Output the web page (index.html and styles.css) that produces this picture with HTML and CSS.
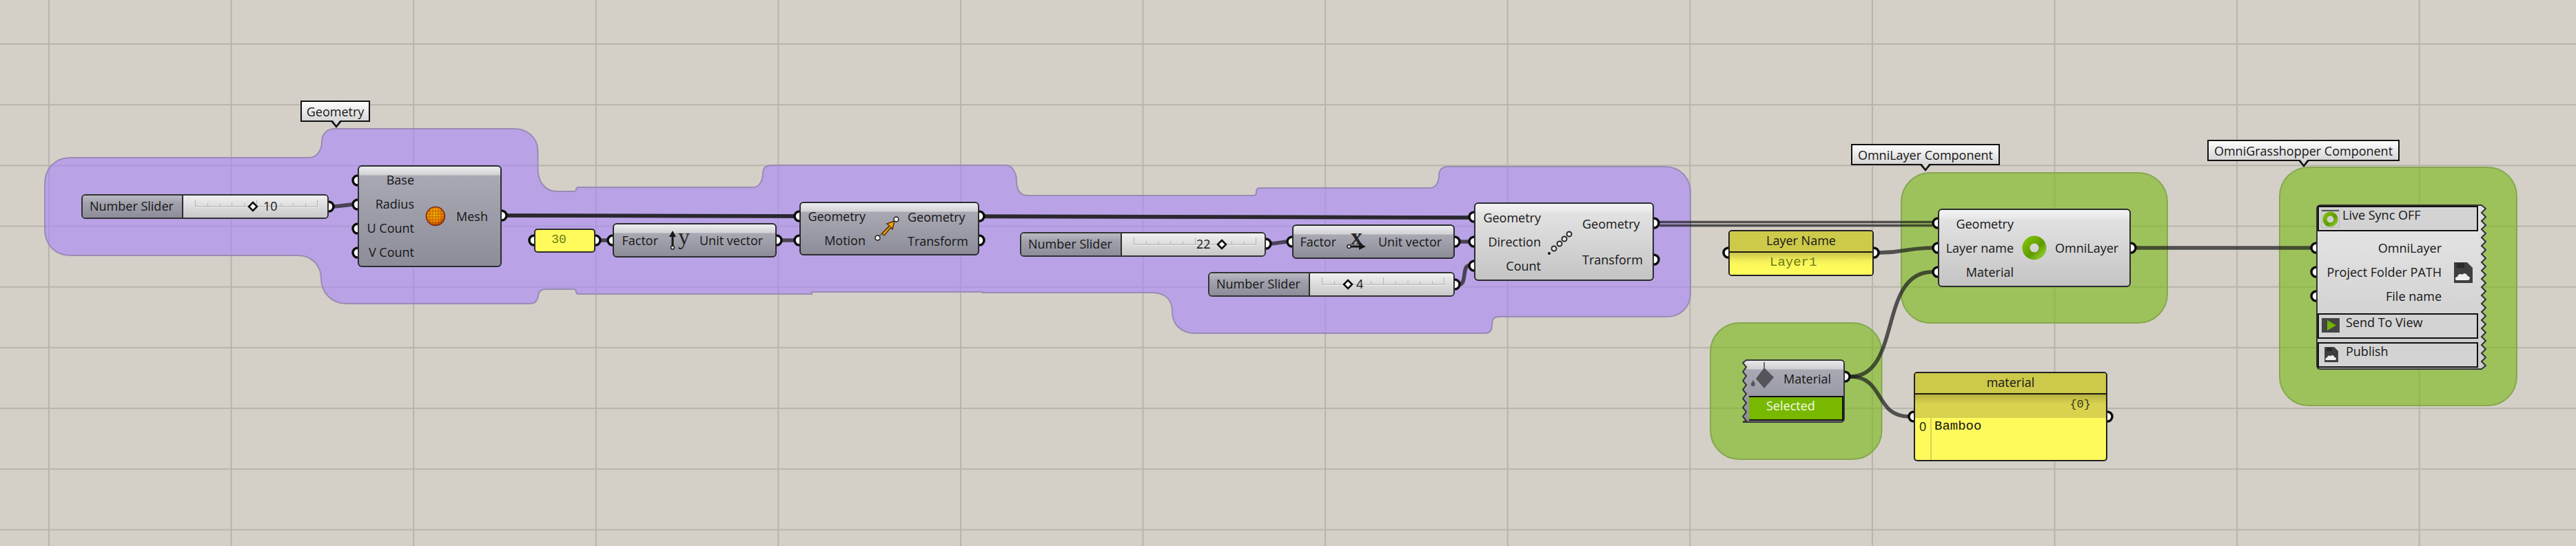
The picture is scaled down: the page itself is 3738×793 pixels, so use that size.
FILE: index.html
```html
<!DOCTYPE html>
<html lang="en">
<head>
    <meta charset="UTF-8">
    <meta name="viewport" content="width=device-width, initial-scale=1.0">
    <title>Grasshopper definition</title>
    <link rel="stylesheet" href="styles.css">
</head>
<body>
    <div class="canvas">
        <!-- groups, wires and ports sit under the nodes -->
        <svg class="wires" width="3738" height="793" viewBox="0 0 3738 793">
            <path class="group group-purple" d="M102 229 L449 229 C460 229 467 218 467 205 C467 195 475 187 485 187 L745 187 C766 187 780.5 200 780.5 220 L780.5 245 C780.5 265 792 278 808 278 L832 278 Q836 278 836 275 Q836 272 840 272 L1093 272 C1102 272 1107 262 1107 252 Q1107 240 1120 240 L1460 240 C1468 240 1475 250 1475 262 C1475 275 1480 284 1492 284 L1819 284 Q1823 284 1823 279 Q1823 273 1828 273 L2075 273 C2083 273 2088 265 2088 255 Q2088 242 2102 242 L2415 242 C2438 242 2453 258 2453 280 L2453 425 C2453 447 2438 460 2418 460 L2174 460 Q2165 460 2165 472 Q2165 484 2155 484 L1735 484 C1712 484 1701 470 1701 452 C1701 435 1690 425 1672 425 L1426 425 L1426 424 L1178 424 L1178 427 L840 427 Q836 427 836 424 Q836 420 832 420 L792 420 Q782 420 781 430 Q779 441 770 441 L502 441 C482 441 466 425 466 405 C466 385 452 371 432 371 L102 371 C80 371 65 355 65 333 L65 267 C65 245 80 229 102 229 Z"/>
            <rect class="group group-green" x="2759" y="251" width="386" height="218" rx="42"/>
            <rect class="group group-green" x="2482" y="469" width="248.500" height="198" rx="42"/>
            <rect class="group group-green" x="3308" y="243" width="344" height="346" rx="42"/>

            <g class="wire">
                <path d="M485 300 L511 297"/>
                <path d="M736 313 L1152 314"/>
                <path d="M736 313 L2131 316"/>
                <path d="M864 349 L881 349"/>
                <path d="M1127 349 L1152 349"/>
                <path d="M1429 314 L2131 316"/>
                <path d="M1845 354 L1867 351"/>
                <path d="M2119 351 L2131 351"/>
                <path d="M2118 413 C2128 413 2122 386 2131 386"/>
                <path d="M2727 367 C2765 367 2765 360 2804 360"/>
                <path d="M3100 360 L3353 360"/>
                <path d="M2685 547 C2760 547 2725 395 2804 395"/>
                <path d="M2685 547 C2735 547 2720 605 2770 605"/>
            </g>
            <g class="wire wire-thin">
                <path d="M2408 322.500 L2804 322.500"/>
                <path d="M2408 327.500 L2804 327.500"/>
            </g>

            <g class="ports">
                <circle cx="477" cy="300" r="7"/>
                <circle cx="519" cy="262" r="7"/>
                <circle cx="519" cy="297" r="7"/>
                <circle cx="519" cy="332" r="7"/>
                <circle cx="519" cy="367" r="7"/>
                <circle cx="728" cy="313" r="7"/>
                <circle cx="775" cy="349" r="7"/>
                <circle cx="864" cy="349" r="7"/>
                <circle cx="889" cy="349" r="7"/>
                <circle cx="1127" cy="349" r="7"/>
                <circle cx="1160" cy="314" r="7"/>
                <circle cx="1160" cy="349" r="7"/>
                <circle cx="1421" cy="314" r="7"/>
                <circle cx="1421" cy="349" r="7"/>
                <circle cx="1837" cy="354" r="7"/>
                <circle cx="1875" cy="351" r="7"/>
                <circle cx="2111" cy="351" r="7"/>
                <circle cx="2111" cy="413" r="7"/>
                <circle cx="2139" cy="315" r="7"/>
                <circle cx="2139" cy="351" r="7"/>
                <circle cx="2139" cy="386" r="7"/>
                <circle cx="2400" cy="324" r="7"/>
                <circle cx="2400" cy="377" r="7"/>
                <circle cx="2508" cy="367" r="7"/>
                <circle cx="2719" cy="367" r="7"/>
                <circle cx="2812" cy="324" r="7"/>
                <circle cx="2812" cy="360" r="7"/>
                <circle cx="2812" cy="395" r="7"/>
                <circle cx="3092" cy="360" r="7"/>
                <circle cx="3361" cy="360" r="7"/>
                <circle cx="3361" cy="395" r="7"/>
                <circle cx="3361" cy="430" r="7"/>
                <circle cx="2677" cy="547" r="7"/>
                <circle cx="2777" cy="605" r="7"/>
                <circle cx="3058" cy="605" r="7"/>
            </g>
        </svg>

        <!-- shared slider ruler -->
        <svg class="defs" width="0" height="0">
            <defs>
                <g id="ruler">
                    <path class="ruler-light" d="M0 19.500 H178"/>
                    <path class="ruler-dark" d="M0.500 8 V18 M18.500 13 V18 M36 13 V18 M53.500 13 V18 M71.500 13 V18 M89.500 8 V18 M107 13 V18 M125 13 V18 M142.500 13 V18 M160.500 13 V18 M177.500 8 V18 M0 18 H178"/>
                </g>
                <g id="floppy">
                    <path class="floppy-body" d="M0 0 H19 L27 8 V30 H0 Z"/>
                    <rect class="floppy-slot" x="4" y="1" width="11" height="7"/>
                    <path class="floppy-cloud" d="M4 26 C1 26 1 21 5 21 C5.500 17 10 16 12 18 C14 15 19 16 19.500 20 C24 20 24 26 20 26 Z"/>
                </g>
                <radialGradient id="ball" cx="0.450" cy="0.400" r="0.600">
                    <stop offset="0" stop-color="#ffb800"/>
                    <stop offset="0.700" stop-color="#ee8a00"/>
                    <stop offset="1" stop-color="#b03a05"/>
                </radialGradient>
                <linearGradient id="ring" x1="0" y1="0" x2="1" y2="1">
                    <stop offset="0" stop-color="#7fbe00"/>
                    <stop offset="0.600" stop-color="#5d9a00"/>
                    <stop offset="1" stop-color="#90c830"/>
                </linearGradient>
                <linearGradient id="zig-dark" x1="0" y1="0" x2="0" y2="1">
                    <stop offset="0" stop-color="#e8e8ea"/>
                    <stop offset="0.150" stop-color="#d0d0d4"/>
                    <stop offset="0.160" stop-color="#a9a9b4"/>
                    <stop offset="1" stop-color="#8d8d99"/>
                </linearGradient>
                <linearGradient id="zig-light" x1="0" y1="0" x2="0" y2="1">
                    <stop offset="0" stop-color="#dfdfdf"/>
                    <stop offset="1" stop-color="#cbcbcb"/>
                </linearGradient>
            </defs>
        </svg>

        <div class="balloon balloon-geometry">Geometry</div>
        <div class="balloon balloon-layer">OmniLayer Component</div>
        <div class="balloon balloon-gh">OmniGrasshopper Component</div>

        <div class="slider slider-a">
            <div class="slider-name">Number Slider</div>
            <div class="slider-body">
                <svg class="ruler" width="178" height="36"><use href="#ruler"/><path class="knob" d="M84 12 L90 18 L84 24 L78 18 Z"/></svg>
                <span class="slider-value value-a">10</span>
            </div>
        </div>
        <div class="slider slider-b">
            <div class="slider-name">Number Slider</div>
            <div class="slider-body">
                <svg class="ruler" width="178" height="36"><use href="#ruler"/><path class="knob" d="M128 12 L134 18 L128 24 L122 18 Z"/></svg>
                <span class="slider-value value-b">22</span>
            </div>
        </div>
        <div class="slider slider-c">
            <div class="slider-name">Number Slider</div>
            <div class="slider-body">
                <svg class="ruler" width="178" height="36"><use href="#ruler"/><path class="knob" d="M38 12 L44 18 L38 24 L32 18 Z"/></svg>
                <span class="slider-value value-c">4</span>
            </div>
        </div>

        <div class="node dark n-mesh">
            <div class="params"><span>Base</span><span>Radius</span><span>U Count</span><span>V Count</span></div>
            <div class="icon">
                <svg width="30" height="30" viewBox="0 0 30 30">
                    <circle cx="15" cy="15" r="13.500" fill="url(#ball)" stroke="#7a2a10" stroke-width="1.500"/>
                    <path class="mesh-lines" d="M3 8 H27 M2 12 H28 M2 16 H28 M2 20 H28 M4 24 H26 M7 3 V27 M11 2 V28 M15 2 V28 M19 2 V28 M23 3 V27"/>
                </svg>
            </div>
            <div class="outputs"><span>Mesh</span></div>
        </div>

        <div class="numbox">30</div>

        <div class="node dark n-unity">
            <div class="params"><span>Factor</span></div>
            <div class="icon axis">
                <svg width="14" height="28" viewBox="0 0 14 28">
                    <path class="arrow-shaft" d="M7 24 V5"/>
                    <path class="arrow-head" d="M7 0 L12 9 H2 Z"/>
                    <circle class="dot" cx="7" cy="24.500" r="2.500"/>
                </svg>
                <span class="axis-letter">y</span>
            </div>
            <div class="outputs"><span>Unit vector</span></div>
        </div>

        <div class="node dark n-move">
            <div class="params"><span>Geometry</span><span>Motion</span></div>
            <div class="icon">
                <svg width="40" height="40" viewBox="0 0 40 40">
                    <path class="motion-line" d="M7 33 L33 6"/>
                    <path class="motion-arrow" d="M13 27 L24 16 L20 13 L31 9 L28 21 L26 18 L16 30 Z"/>
                    <circle class="dot" cx="6.500" cy="33.500" r="3.500"/>
                    <circle class="dot" cx="33.500" cy="6.500" r="3.500"/>
                </svg>
            </div>
            <div class="outputs"><span>Geometry</span><span>Transform</span></div>
        </div>

        <div class="node dark n-unitx">
            <div class="params"><span>Factor</span></div>
            <div class="icon axis axis-x">
                <span class="axis-letter">x</span>
                <svg width="30" height="12" viewBox="0 0 30 12">
                    <path class="arrow-shaft" d="M4 6 H20"/>
                    <path class="arrow-head" d="M28 6 L18 1 V11 Z"/>
                    <circle class="dot" cx="3.500" cy="6" r="2.500"/>
                </svg>
            </div>
            <div class="outputs"><span>Unit vector</span></div>
        </div>

        <div class="node light n-array">
            <div class="params"><span>Geometry</span><span>Direction</span><span>Count</span></div>
            <div class="icon">
                <svg width="44" height="44" viewBox="0 0 44 44">
                    <circle class="tip" cx="4" cy="39" r="2"/>
                    <circle class="link" cx="11" cy="32" r="3.500"/>
                    <circle class="link" cx="19" cy="25" r="3.500"/>
                    <circle class="link" cx="26" cy="18" r="3.500"/>
                    <circle class="link" cx="33" cy="11" r="3.500"/>
                </svg>
            </div>
            <div class="outputs"><span>Geometry</span><span>Transform</span></div>
        </div>

        <div class="panel n-layername">
            <div class="panel-head">Layer Name</div>
            <div class="panel-fade">Layer1</div>
        </div>

        <div class="node light n-omni">
            <div class="params"><span>Geometry</span><span>Layer name</span><span>Material</span></div>
            <div class="icon">
                <svg width="36" height="36" viewBox="0 0 36 36">
                    <circle cx="18" cy="18" r="12" fill="none" stroke="url(#ring)" stroke-width="11"/>
                </svg>
            </div>
            <div class="outputs"><span>OmniLayer</span></div>
        </div>

        <div class="material">
            <svg class="zig zig-left" width="10" height="92" viewBox="0 0 10 92">
                <path fill="url(#zig-dark)" d="M10 0 H6 L1 5 L6 11 L1 18 L6 24 L1 31 L6 37 L1 44 L6 50 L1 57 L6 63 L1 70 L6 76 L1 83 L6 89 L1 91 H10"/>
                <path class="zig-line" d="M10 1 H6 L1 5 L6 11 L1 18 L6 24 L1 31 L6 37 L1 44 L6 50 L1 57 L6 63 L1 70 L6 76 L1 83 L6 89 L1 91 H10"/>
            </svg>
            <div class="material-head">
                <svg class="bucket" width="36" height="46" viewBox="0 0 36 46">
                    <path class="bucket-handle" d="M20 2 V16"/>
                    <path class="bucket-body" d="M20 10 L34 24 L20 40 L8 26 Z"/>
                    <path class="bucket-body" d="M4 28 C7 33 8 35 5 37 C2 38 0 35 1 33 Z"/>
                </svg>
                <span class="material-name">Material</span>
            </div>
            <div class="material-pick">Selected</div>
        </div>

        <div class="panel n-materialpanel">
            <div class="panel-head panel-head-tall">material</div>
            <div class="panel-path">{0}</div>
            <div class="panel-list"><span class="panel-index">0</span><span class="panel-item">Bamboo</span></div>
        </div>

        <div class="gh">
            <div class="gh-btn">
                <svg class="btn-icon icon-sync" width="27" height="27" viewBox="0 0 27 27">
                    <rect class="sync-frame" x="0.500" y="0.500" width="26" height="26"/>
                    <path class="sync-bar" d="M1 2 H26"/>
                    <circle cx="13.500" cy="14.500" r="8" fill="none" stroke="url(#ring)" stroke-width="6"/>
                </svg>
                <span class="btn-text text-sync">Live Sync OFF</span>
            </div>
            <div class="gh-params">
                <div class="params"><span>OmniLayer</span><span>Project Folder PATH</span><span>File name</span></div>
                <svg class="gh-floppy" width="27" height="30" viewBox="0 0 27 30"><use href="#floppy"/></svg>
            </div>
            <div class="gh-btn">
                <svg class="btn-icon icon-send" width="26" height="21" viewBox="0 0 26 21">
                    <rect class="send-back" width="26" height="21"/>
                    <path class="send-play" d="M8 3 L21 10.500 L8 18 Z"/>
                </svg>
                <span class="btn-text text-send">Send To View</span>
            </div>
            <div class="gh-btn">
                <svg class="btn-icon icon-pub" width="20" height="22" viewBox="0 0 27 30"><use href="#floppy"/></svg>
                <span class="btn-text text-pub">Publish</span>
            </div>
            <svg class="zig zig-right" width="10" height="240" viewBox="0 0 10 240">
                <path fill="url(#zig-light)" d="M0 0 H3 L9 6 L3 12 L9 18 L3 24 L9 30 L3 36 L9 42 L3 48 L9 54 L3 60 L9 66 L3 72 L9 78 L3 84 L9 90 L3 96 L9 102 L3 108 L9 114 L3 120 L9 126 L3 132 L9 138 L3 144 L9 150 L3 156 L9 162 L3 168 L9 174 L3 180 L9 186 L3 192 L9 198 L3 204 L9 210 L3 216 L9 222 L3 228 L9 234 L3 240 H0 Z"/>
                <path class="zig-line" d="M0 1 H3 L9 6 L3 12 L9 18 L3 24 L9 30 L3 36 L9 42 L3 48 L9 54 L3 60 L9 66 L3 72 L9 78 L3 84 L9 90 L3 96 L9 102 L3 108 L9 114 L3 120 L9 126 L3 132 L9 138 L3 144 L9 150 L3 156 L9 162 L3 168 L9 174 L3 180 L9 186 L3 192 L9 198 L3 204 L9 210 L3 216 L9 222 L3 228 L9 234 L3 239 H0"/>
            </svg>
        </div>
    </div>
</body>
</html>
```

FILE: styles.css
```css
* {
    box-sizing: border-box;
}
html, body {
    margin: 0;
    padding: 0;
    overflow: hidden;
}
body {
    font-family: "Open Sans", "Noto Sans", sans-serif;
    font-size: 18px;
    color: #161616;
    background: #d4d0c8;
}

/* canvas and grid */
.canvas {
    position: relative;
    width: 3738px;
    height: 793px;
    overflow: hidden;
    background-color: #d4d0c8;
    background-image:
        linear-gradient(90deg, #b8b4ab 2px, transparent 2px),
        linear-gradient(180deg, #b8b4ab 2px, transparent 2px);
    background-size: 264.6px 88.2px;
    background-position: 70px 63px;
}
.wires, .defs {
    position: absolute;
    left: 0;
    top: 0;
}
.group {
    stroke-width: 2;
}
.group-purple {
    fill: rgba(167, 133, 250, 0.6);
    stroke: #9a8bb4;
}
.group-green {
    fill: rgba(120, 185, 20, 0.6);
    stroke: #86a84e;
}
.wire path {
    fill: none;
    stroke: rgba(30, 30, 30, 0.72);
    stroke-width: 5.5;
}
.wire-thin path {
    stroke-width: 3.5;
}
.ports circle {
    fill: #fff;
    stroke: #0c0c0c;
    stroke-width: 3.5;
}

/* balloons */
.balloon {
    position: absolute;
    display: flex;
    align-items: center;
    justify-content: center;
    height: 31px;
    border: 2px solid #111;
    background: linear-gradient(#fdfdfd, #d6d6d6);
    white-space: nowrap;
}
.balloon::before, .balloon::after {
    content: "";
    position: absolute;
    left: var(--tip);
    width: 0;
    height: 0;
    border-style: solid;
    border-color: transparent;
}
.balloon::before {
    top: 100%;
    margin-left: -9px;
    border-width: 11px 9px 0;
    border-top-color: #111;
}
.balloon::after {
    top: 100%;
    margin-left: -6px;
    margin-top: -1px;
    border-width: 8px 6px 0;
    border-top-color: #d8d8d8;
}
.balloon-geometry {
    left: 436px;
    top: 146px;
    width: 101px;
    --tip: 50px;
}
.balloon-layer {
    left: 2686px;
    top: 209px;
    width: 216px;
    --tip: 106px;
}
.balloon-gh {
    left: 3203px;
    top: 203px;
    width: 279px;
    --tip: 138px;
}

/* components */
.node {
    position: absolute;
    display: grid;
    align-items: center;
    border: 2px solid #2c2c30;
    border-radius: 6px;
}
.dark {
    background: linear-gradient(#ecedef 0, #d2d2d6 12px, #a9a9b4 13px, #8d8d99 100%);
}
.light {
    background: linear-gradient(#f4f4f4 0, #e8e8e8 12px, #e2e2e2 13px, #c4c4c4 100%);
}
.params, .outputs {
    display: flex;
    flex-direction: column;
    justify-content: center;
    height: 100%;
    white-space: nowrap;
}
.params {
    text-align: right;
}
.params span {
    height: 35px;
    line-height: 35px;
}
.outputs {
    justify-content: space-around;
    align-self: center;
}
.icon {
    display: flex;
    align-items: center;
    justify-content: center;
}
.n-mesh {
    left: 519px;
    top: 240px;
    width: 209px;
    height: 148px;
    grid-template-columns: 80px 61px 1fr;
}
.n-unity {
    left: 889px;
    top: 324px;
    width: 238px;
    height: 50px;
    grid-template-columns: 64px 60px 1fr;
}
.n-move {
    left: 1160px;
    top: 293px;
    width: 261px;
    height: 78px;
    grid-template-columns: 94px 61px 1fr;
}
.n-unitx {
    left: 1875px;
    top: 326px;
    width: 236px;
    height: 50px;
    grid-template-columns: 62px 61px 1fr;
}
.n-array {
    left: 2139px;
    top: 294px;
    width: 261px;
    height: 114px;
    grid-template-columns: 95px 60px 1fr;
}
.n-omni {
    left: 2812px;
    top: 303px;
    width: 280px;
    height: 114px;
    grid-template-columns: 108px 60px 1fr;
}
.n-array .outputs {
    height: 105px;
}
.n-move .outputs {
    height: 70px;
}

/* icon parts */
.mesh-lines {
    stroke: rgba(150, 60, 0, 0.55);
    stroke-width: 1;
    fill: none;
}
.axis {
    gap: 1px;
    color: #262626;
}
.axis-letter {
    font-family: "Liberation Serif", serif;
    font-size: 34px;
    line-height: 34px;
    margin-top: -10px;
}
.axis-x {
    flex-direction: column;
    margin-left: -2px;
}
.axis-x .axis-letter {
    font-weight: bold;
    margin-top: -12px;
    height: 24px;
}
.arrow-shaft {
    stroke: #161616;
    stroke-width: 3;
    fill: none;
}
.arrow-head {
    fill: #161616;
}
.dot {
    fill: #eee;
    stroke: #222;
    stroke-width: 1.5;
}
.motion-line {
    stroke: #6a5a30;
    stroke-width: 1.5;
}
.motion-arrow {
    fill: #f2a80a;
    stroke: #5a3208;
    stroke-width: 1.5;
}
.tip {
    fill: #111;
}
.link {
    fill: #eee;
    stroke: #2a2a2a;
    stroke-width: 2;
}

/* sliders */
.slider {
    position: absolute;
    display: flex;
    height: 36px;
    border: 2px solid #333;
    border-radius: 6px;
    overflow: hidden;
}
.slider-a {
    left: 118px;
    top: 282px;
    width: 359px;
}
.slider-b {
    left: 1480px;
    top: 337px;
    width: 357px;
}
.slider-c {
    left: 1753px;
    top: 395px;
    width: 358px;
}
.slider-name {
    flex: none;
    width: 146px;
    padding-left: 10px;
    line-height: 31px;
    white-space: nowrap;
    border-right: 2px solid #2c2c30;
    background: linear-gradient(#b9b9c2 0, #a9a9b4 8px, #a3a3ae 9px, #8d8d99 100%);
}
.slider-b .slider-name, .slider-c .slider-name {
    width: 146px;
}
.slider-body {
    position: relative;
    flex: 1;
    padding-left: 17px;
    background: linear-gradient(#f0f0f0, #c8c8c8);
}
.ruler {
    display: block;
    margin-top: -2px;
}
.ruler-dark {
    stroke: #b4b4b4;
    stroke-width: 1;
    fill: none;
}
.ruler-light {
    stroke: #ececec;
    stroke-width: 1;
    fill: none;
}
.knob {
    fill: #fff;
    stroke: #0c0c0c;
    stroke-width: 2.5;
}
.slider-value {
    position: absolute;
    top: 0;
    line-height: 31px;
}
.value-a {
    left: 116px;
}
.value-b {
    left: 108px;
}
.value-c {
    left: 67px;
}

/* number box and panels */
.numbox {
    position: absolute;
    left: 775px;
    top: 332px;
    width: 89px;
    height: 35px;
    padding-right: 17px;
    text-align: center;
    line-height: 28px;
    font-family: "Liberation Mono", monospace;
    color: #6b7c10;
    background: #fffb5c;
    border: 2px solid #2c2c2c;
    border-radius: 5px;
}
.panel {
    position: absolute;
    border: 2px solid #222;
    border-radius: 5px;
    overflow: hidden;
    background: #fffa5c;
    display: flex;
    flex-direction: column;
}
.n-layername {
    left: 2508px;
    top: 334px;
    width: 211px;
    height: 67px;
}
.n-materialpanel {
    left: 2777px;
    top: 540px;
    width: 281px;
    height: 130px;
}
.panel-head {
    flex: none;
    height: 31px;
    line-height: 26px;
    text-align: center;
    background: #cdc94a;
    border-bottom: 2px solid #1c1c10;
}
.panel-head-tall {
    height: 31px;
}
.panel-fade {
    flex: 1;
    padding-left: 58px;
    line-height: 28px;
    font-family: "Liberation Mono", monospace;
    font-size: 19px;
    color: #6b7c10;
    background: linear-gradient(#c9c54a 0, #f5f05a 12px, #fffa5c 20px);
}
.panel-path {
    flex: none;
    height: 34px;
    padding-right: 22px;
    text-align: right;
    line-height: 30px;
    font-family: "Liberation Mono", monospace;
    font-size: 17px;
    color: #3a3a20;
    background: linear-gradient(#b8b240, #d8d24e 40%);
}
.panel-list {
    flex: 1;
    display: flex;
}
.panel-index {
    width: 24px;
    padding-left: 6px;
    line-height: 24px;
    border-right: 2px solid #d8d24e;
}
.panel-item {
    padding-left: 4px;
    line-height: 24px;
    font-family: "Liberation Mono", monospace;
    font-size: 19px;
}

/* material value list */
.material {
    position: absolute;
    left: 2536px;
    top: 522px;
    width: 141px;
    height: 92px;
    border: 2px solid #36363a;
    border-left: none;
    border-radius: 0 6px 6px 0;
    background: linear-gradient(#e8e8ea 0, #d0d0d4 12px, #a9a9b4 13px, #8d8d99 100%);
}
.zig {
    position: absolute;
}
.zig-left {
    left: -8px;
    top: -2px;
}
.zig-line {
    fill: none;
    stroke: #33333a;
    stroke-width: 2;
}
.material-head {
    height: 51px;
    padding-left: 52px;
    display: flex;
    align-items: center;
}
.bucket {
    position: absolute;
    left: 4px;
    top: 0;
}
.bucket-handle {
    stroke: #6a6a70;
    stroke-width: 2;
}
.bucket-body {
    fill: #54545a;
}
.material-pick {
    height: 36px;
    margin-right: 0;
    padding-left: 25px;
    line-height: 24px;
    color: #f4fbe6;
    background: #78b800;
    border: 2px solid #111;
}

/* main plugin component */
.gh {
    position: absolute;
    left: 3361px;
    top: 297px;
    width: 237px;
    height: 240px;
    display: flex;
    flex-direction: column;
    padding: 0 0 0 0;
    border: 2px solid #333;
    border-right: none;
    border-radius: 6px 0 0 6px;
    background: linear-gradient(#e8e8e8, #c8c8c8);
}
.gh-btn {
    position: relative;
    flex: none;
    height: 37px;
    width: 233px;
    background: #d3d3d3;
    border: 2.500px solid #111;
}
.gh-btn + .gh-btn {
    margin-top: 5px;
}
.btn-icon {
    position: absolute;
}
.icon-sync {
    left: 3px;
    top: 3px;
}
.icon-send {
    left: 4px;
    top: 5px;
}
.icon-pub {
    left: 8px;
    top: 5px;
}
.btn-text {
    position: absolute;
    top: 0;
    line-height: 23px;
    white-space: nowrap;
}
.text-sync {
    left: 34px;
}
.text-send, .text-pub {
    left: 39px;
}
.gh-params {
    flex: none;
    height: 119px;
    display: flex;
    align-items: center;
}
.gh-params .params {
    width: 180px;
}
.gh-floppy {
    margin-left: 18px;
}
.floppy-body {
    fill: #3f3f3f;
}
.floppy-slot {
    fill: #2a2a2a;
}
.floppy-cloud {
    fill: #f0f0f0;
}
.sync-frame {
    fill: #cfcfcf;
    stroke: #bdbdbd;
}
.sync-bar {
    stroke: #555;
    stroke-width: 2;
}
.send-back {
    fill: #454545;
}
.send-play {
    fill: #73b300;
}
.zig-right {
    left: 235px;
    top: -2px;
}
```
